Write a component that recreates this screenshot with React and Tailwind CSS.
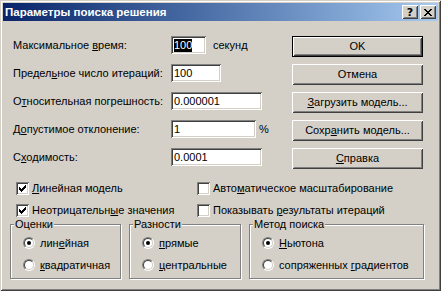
import React from "react";

const F = "font-['Liberation_Sans',Arial,sans-serif]";

function U({ children }) {
  return <span className="underline underline-offset-[1px] decoration-[1px]">{children}</span>;
}

const sunken =
  "shadow-[inset_1px_1px_0_#808080,inset_-1px_-1px_0_#ffffff,inset_2px_2px_0_#404040,inset_-2px_-2px_0_#d4d0c8]";
const raised =
  "shadow-[inset_1px_1px_0_#ffffff,inset_-1px_-1px_0_#404040,inset_2px_2px_0_#d4d0c8,inset_-2px_-2px_0_#808080]";

function Field({ w, value, selected }) {
  return (
    <div className={`h-[18px] bg-white flex items-center pl-[3px] ${sunken}`} style={{ width: w }}>
      {selected ? (
        <span className="bg-black text-white leading-[13px] px-0">{value}</span>
      ) : (
        <span className="text-black leading-[13px]">{value}</span>
      )}
    </div>
  );
}

function Button({ children, def }) {
  if (def) {
    return (
      <div className="h-[21px] w-[131px] border border-black">
        <div className={`w-full h-full flex items-center justify-center ${raised}`}>{children}</div>
      </div>
    );
  }
  return (
    <div className={`h-[21px] w-[131px] flex items-center justify-center ${raised}`}>{children}</div>
  );
}

function Check({ checked }) {
  return (
    <div className={`w-[13px] h-[13px] bg-white shrink-0 ${sunken} relative`}>
      {checked && (
        <svg width="13" height="13" viewBox="0 0 13 13" className="absolute left-0 top-0" shapeRendering="crispEdges">
          <path
            fill="#000"
            d="M9 3h1v1H9zM8 4h2v1H8zM3 5h1v1H3zM7 5h3v1H7zM3 6h2v1H3zM6 6h3v1H6zM3 7h5v1H3zM4 8h3v1H4zM5 9h1v1H5z"
          />
        </svg>
      )}
    </div>
  );
}

function Radio({ checked }) {
  return (
    <div className="w-[12px] h-[12px] rounded-full shrink-0 border border-t-[#808080] border-l-[#808080] border-b-white border-r-white">
      <div className="w-full h-full rounded-full bg-white border border-t-[#404040] border-l-[#404040] border-b-[#d4d0c8] border-r-[#d4d0c8] flex items-center justify-center">
        {checked && <div className="w-[4px] h-[4px] rounded-full bg-black" />}
      </div>
    </div>
  );
}

function Group({ title, w, items }) {
  return (
    <div
      className="relative h-[55px] border border-[#808080] shadow-[1px_1px_0_#ffffff,inset_1px_1px_0_#ffffff] shrink-0"
      style={{ width: w }}
    >
      <span className="absolute left-[3px] top-[-8px] bg-[#d4d0c8] px-[1px] leading-[14px]">{title}</span>
      <div className="flex flex-col pl-[12px] pt-[11px] gap-[8px]">
        {items.map((it, i) => (
          <div key={i} className="flex items-center gap-[5px] h-[14px]">
            <Radio checked={i === 0} />
            <span className="leading-[14px]">{it}</span>
          </div>
        ))}
      </div>
    </div>
  );
}

export default function App() {
  const rows = [
    { label: <>Максимальное <U>в</U>ремя:</>, w: 35, value: "100", selected: true, suffix: "секунд", sg: 7 },
    { label: <>Предел<U>ь</U>ное число итераций:</>, w: 50, value: "100" },
    { label: <>О<U>т</U>носительная погрешность:</>, w: 91, value: "0.000001" },
    { label: <>Д<U>о</U>пустимое отклонение:</>, w: 85, value: "1", suffix: "%", sg: 3 },
    { label: <>С<U>х</U>одимость:</>, w: 91, value: "0.0001" },
  ];
  return (
    <div
      className={`w-[441px] h-[291px] bg-[#d4d0c8] p-[3px] flex flex-col text-[11px] text-black ${F} shadow-[inset_1px_1px_0_#d4d0c8,inset_-1px_-1px_0_#404040,inset_2px_2px_0_#ffffff,inset_-2px_-2px_0_#808080] overflow-hidden`}
    >
      {/* Title bar */}
      <div className="h-[18px] bg-gradient-to-r from-[#0a246a] to-[#a6caf0] flex items-center pl-[2px] pr-[2px] shrink-0">
        <span className="text-white font-bold text-[11.5px] leading-[14px]">Параметры поиска решения</span>
        <div className="ml-auto flex gap-[2px]">
          <div className={`w-[16px] h-[14px] bg-[#d4d0c8] ${raised} flex items-center justify-center`}>
            <span className="font-bold text-[11px] leading-[11px] text-black font-['DejaVu_Sans',sans-serif]">?</span>
          </div>
          <div className={`w-[16px] h-[14px] bg-[#d4d0c8] ${raised} flex items-center justify-center`}>
            <svg width="8" height="7" viewBox="0 0 8 7" shapeRendering="crispEdges">
              <path
                fill="#000"
                d="M0 0h2v1H0zM6 0h2v1H6zM1 1h2v1H1zM5 1h2v1H5zM2 2h4v1H2zM3 3h2v1H3zM2 4h4v1H2zM1 5h2v1H1zM5 5h2v1H5zM0 6h2v1H0zM6 6h2v1H6z"
              />
            </svg>
          </div>
        </div>
      </div>

      {/* Body */}
      <div className="flex flex-col px-[7px]">
        <div className="flex pt-[10px]">
          <div className="w-[282px] flex flex-col pl-[3px]">
            {rows.map((r, i) => (
              <div key={i} className="h-[28px] flex items-center">
                <div className="w-[158px]">{r.label}</div>
                <Field w={r.w} value={r.value} selected={r.selected} />
                {r.suffix && <span style={{ marginLeft: r.sg }}>{r.suffix}</span>}
              </div>
            ))}
          </div>
          <div className="flex flex-col pt-[5px] gap-[7px]">
            <Button def>OK</Button>
            <Button>Отмена</Button>
            <Button>
              <span>
                <U>З</U>агрузить модель...
              </span>
            </Button>
            <Button>
              <span>
                Сохр<U>а</U>нить модель...
              </span>
            </Button>
            <Button>
              <span>
                <U>С</U>правка
              </span>
            </Button>
          </div>
        </div>

        {/* checkboxes */}
        <div className="flex flex-col mt-[6px]">
          <div className="h-[22px] flex items-center">
            <div className="w-[187px] pl-[6px] flex items-center gap-[3px]">
              <Check checked />
              <span>
                <U>Л</U>инейная модель
              </span>
            </div>
            <div className="flex items-center gap-[3px]">
              <Check />
              <span>
                Авто<U>м</U>атическое масштабирование
              </span>
            </div>
          </div>
          <div className="h-[22px] flex items-center">
            <div className="w-[187px] pl-[6px] flex items-center gap-[3px]">
              <Check checked />
              <span>
                Неотрицательн<U>ы</U>е значения
              </span>
            </div>
            <div className="flex items-center gap-[3px]">
              <Check />
              <span>
                Показывать <U>р</U>езультаты итераций
              </span>
            </div>
          </div>
        </div>

        {/* groups */}
        <div className="flex gap-[8px] mt-[3px]">
          <Group
            title="Оценки"
            w={111}
            items={[
              <>
                лин<U>е</U>йная
              </>,
              <>
                <U>к</U>вадратичная
              </>,
            ]}
          />
          <Group
            title="Разности"
            w={112}
            items={[
              <>
                <U>п</U>рямые
              </>,
              <>
                <U>ц</U>ентральные
              </>,
            ]}
          />
          <Group
            title="Метод поиска"
            w={175}
            items={[
              <>
                <U>Н</U>ьютона
              </>,
              <>
                сопряженных <U>г</U>радиентов
              </>,
            ]}
          />
        </div>
      </div>
    </div>
  );
}
